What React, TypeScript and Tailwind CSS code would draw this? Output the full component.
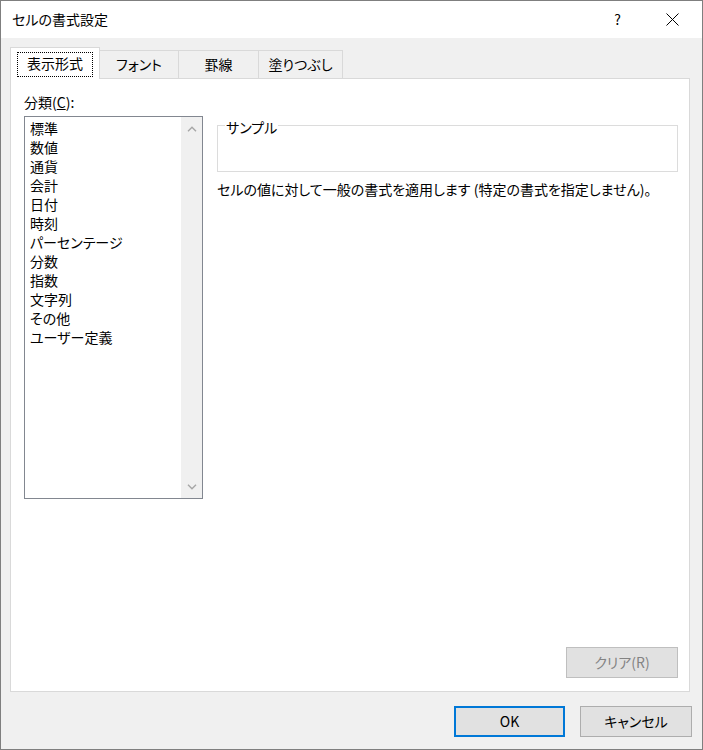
const FONT = "font-['Noto_Sans_CJK_JP','Noto_Sans',sans-serif] [font-feature-settings:'palt']";

const CATEGORIES = [
  "標準",
  "数値",
  "通貨",
  "会計",
  "日付",
  "時刻",
  "パーセンテージ",
  "分数",
  "指数",
  "文字列",
  "その他",
  "ユーザー定義",
];

function Chevron({ up }: { up?: boolean }) {
  return (
    <svg width="10" height="6" viewBox="0 0 10 6" className="block">
      <path
        d={up ? "M1 5.2 L5 1.2 L9 5.2" : "M1 0.8 L5 4.8 L9 0.8"}
        fill="none"
        stroke="#a6a6a6"
        strokeWidth="1.4"
      />
    </svg>
  );
}

export default function App() {
  return (
    <div className={`${FONT} box-border flex h-[750px] w-[703px] flex-col border border-[#7f7f7f] text-[14px] text-black`}>
      {/* title bar */}
      <div className="flex h-[37px] shrink-0 items-center bg-white pl-[11px]">
        <span className="leading-[19px]">セルの書式設定</span>
        <span className="ml-auto mr-[45px] leading-[19px]">?</span>
        <svg width="13" height="13" viewBox="0 0 13 13" className="mr-[23px]">
          <path d="M0.5 0.5 L12.5 12.5 M12.5 0.5 L0.5 12.5" stroke="#000" strokeWidth="1" />
        </svg>
      </div>

      {/* body */}
      <div className="flex flex-1 flex-col bg-[#f0f0f0] pl-[9px]">
        {/* tabs */}
        <div className="mt-[9px] flex h-[31px] items-end">
          <div className="relative z-10 -mb-px box-border flex h-[32px] w-[90px] items-start justify-center border border-b-0 border-[#d9d9d9] bg-white pt-[4px]">
            <span className="border border-dotted border-black px-[9px] pb-[3px] pt-[1px] leading-[19px]">表示形式</span>
          </div>
          <div className="box-border flex h-[28px] w-[79px] items-center justify-center border-r border-t border-[#d9d9d9] pb-[1px] leading-[19px]">
            フォント
          </div>
          <div className="box-border flex h-[28px] w-[80px] items-center justify-center border-r border-t border-[#d9d9d9] pb-[1px] leading-[19px]">
            罫線
          </div>
          <div className="box-border flex h-[28px] w-[84px] items-center justify-center border-r border-t border-[#d9d9d9] pb-[1px] leading-[19px]">
            塗りつぶし
          </div>
        </div>

        {/* panel */}
        <div className="box-border flex h-[614px] w-[680px] flex-col border border-[#d9d9d9] bg-white">
          <div className="flex pl-[13px] pt-[14px]">
            <div className="flex flex-col">
              <div className="leading-[19px]">
                分類(<span className="underline">C</span>):
              </div>
              <div className="mt-[4px] box-border flex h-[383px] w-[179px] border border-[#828790]">
                <ul className="flex-1 pl-[5px] pt-[2px]">
                  {CATEGORIES.map((c) => (
                    <li key={c} className="leading-[19px]">
                      {c}
                    </li>
                  ))}
                </ul>
                <div className="flex w-[21px] flex-col items-center justify-between bg-[#f0f0f0] pb-[8px] pt-[9px]">
                  <Chevron up />
                  <Chevron />
                </div>
              </div>
            </div>

            <div className="ml-[14px] flex w-[461px] flex-col">
              <div className="relative mt-[32px] box-border h-[47px] border border-[#dcdcdc]">
                <span className="absolute -top-[8px] left-[7px] bg-white px-[1px] leading-[19px]">サンプル</span>
              </div>
              <div className="mt-[8px] whitespace-nowrap leading-[19px]">
                セルの値に対して一般の書式を適用します (特定の書式を指定しません)。
              </div>
            </div>
          </div>

          <div className="mb-[13px] mr-[11px] mt-auto flex justify-end">
            <button className="box-border h-[31px] w-[112px] border border-[#bfbfbf] bg-[#e1e1e1] text-[#838383]">
              クリア(R)
            </button>
          </div>
        </div>

        {/* dialog buttons */}
        <div className="mt-[14px] flex justify-end gap-[15px] pr-[10px]">
          <button className="box-border h-[31px] w-[111px] border-2 border-[#0078d7] bg-[#e1e1e1]">OK</button>
          <button className="box-border h-[31px] w-[112px] border border-[#adadad] bg-[#e1e1e1]">キャンセル</button>
        </div>
      </div>
    </div>
  );
}
